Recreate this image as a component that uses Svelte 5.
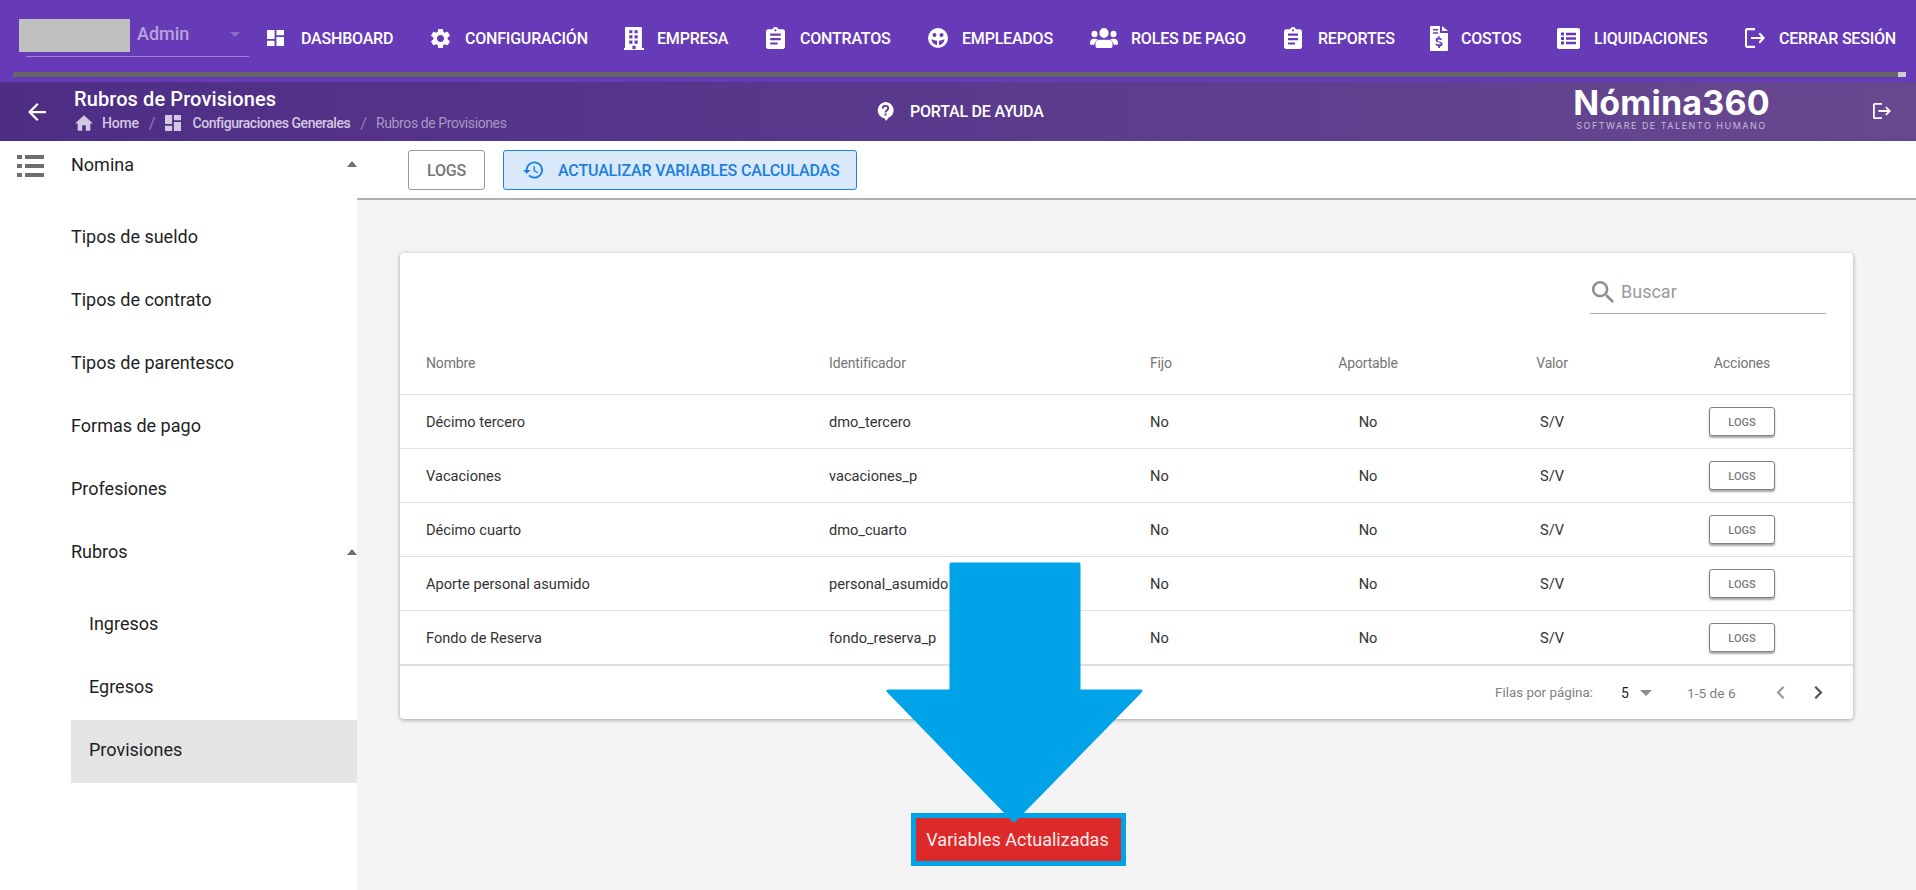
<script>
  const dash = 'M3 13h8V3H3v10zm0 8h8v-6H3v6zm10 0h8V11h-8v10zm0-18v6h8V3h-8z';
  const gear = 'M19.14 12.94c.04-.3.06-.61.06-.94 0-.32-.02-.64-.07-.94l2.03-1.58c.18-.14.23-.41.12-.61l-1.92-3.32c-.12-.22-.37-.29-.59-.22l-2.39.96c-.5-.38-1.03-.7-1.62-.94l-.36-2.54c-.04-.24-.24-.41-.48-.41h-3.84c-.24 0-.43.17-.47.41l-.36 2.54c-.59.24-1.13.57-1.62.94l-2.39-.96c-.22-.08-.47 0-.59.22L2.74 8.87c-.12.21-.08.47.12.61l2.03 1.58c-.05.3-.09.63-.09.94s.02.64.07.94l-2.03 1.58c-.18.14-.23.41-.12.61l1.92 3.32c.12.22.37.29.59.22l2.39-.96c.5.38 1.03.7 1.62.94l.36 2.54c.05.24.24.41.48.41h3.84c.24 0 .44-.17.47-.41l.36-2.54c.59-.24 1.13-.56 1.62-.94l2.39.96c.22.08.47 0 .59-.22l1.92-3.32c.12-.22.07-.47-.12-.61l-2.01-1.58zM12 15.6c-1.98 0-3.6-1.62-3.6-3.6s1.62-3.6 3.6-3.6 3.6 1.62 3.6 3.6-1.62 3.6-3.6 3.6z';
  const building = 'M2 0h14a1 1 0 0 1 1 1v19h2v2H0v-2h1V1a1 1 0 0 1 1-1zM5 3v3h3V3zM10 3v3h3V3zM5 8v3h3V8zM10 8v3h3V8zM5 13v3h3v-3zM10 13v3h3v-3zM8 18v3h3v-3z';
  const clip = 'M19 3h-4.18C14.4 1.84 13.3 1 12 1c-1.3 0-2.4.84-2.82 2H5c-1.1 0-2 .9-2 2v14c0 1.1.9 2 2 2h14c1.1 0 2-.9 2-2V5c0-1.1-.9-2-2-2zm-7 0c.55 0 1 .45 1 1s-.45 1-1 1-1-.45-1-1 .45-1 1-1zm2 14H7v-2h7v2zm3-4H7v-2h10v2zm0-4H7V7h10v2z';
  const face = 'M10 0a10 10 0 1 1 0 20a10 10 0 1 1 0-20zM6.5 5a2 2 0 1 0 0 4a2 2 0 1 0 0-4zM13.5 5a2 2 0 1 0 0 4a2 2 0 1 0 0-4zM3.5 11c.2 3 1.8 5.4 5.5 6.2v-4.4c-1.6-.2-3.6-.9-5.5-1.8zM16.5 11c-1.9.9-3.9 1.6-5.5 1.8v4.4c3.7-.8 5.3-3.2 5.5-6.2z';
  const users = 'M14 0a4.6 4.6 0 1 1 0 9.2a4.6 4.6 0 1 1 0-9.2zM4.5 2.6a3 3 0 1 1 0 6a3 3 0 1 1 0-6zM23.5 2.6a3 3 0 1 1 0 6a3 3 0 1 1 0-6zM0 14c0-2.3 1.4-4 3.6-4h2.2c.7 0 1.3.2 1.9.6c-1.8 1-3 2.8-3.3 5H1.2C.5 15.6 0 15 0 14zM28 14c0-2.3-1.4-4-3.6-4h-2.2c-.7 0-1.3.2-1.9.6c1.8 1 3 2.8 3.3 5h3.2c.7 0 1.2-.6 1.2-1.6zM9 10.8h10c2 0 3.5 1.6 3.5 3.6v2.2c0 1-.8 1.9-1.8 1.9H7.3c-1 0-1.8-.9-1.8-1.9v-2.2c0-2 1.5-3.6 3.5-3.6z';
  const file = 'M1 0h9v6c0 .6.4 1 1 1h7v17c0 .6-.4 1-1 1H1c-.6 0-1-.4-1-1V1c0-.6.4-1 1-1zM12 0l6 5h-6zM3 3v1.6h5V3zM3 6.200v1.600h5V6.200zM8.200 10v1.400c-1.600.2-2.600 1.200-2.600 2.500c0 2.900 5 2 5 3.500c0 .6-.7.9-1.600.9c-1 0-1.900-.3-2.800-.9l-.8 1.500c.8.6 1.800 1 2.800 1.100V22h1.800v-1.400c1.600-.3 2.600-1.300 2.600-2.700c0-3-5-2.100-5-3.500c0-.5.6-.8 1.400-.8c.9 0 1.700.3 2.300.6l.7-1.500c-.7-.4-1.500-.7-2.400-.8V10z';
  const listAlt = 'M2 0h19c1.100 0 2 .9 2 2v17c0 1.100-.9 2-2 2H2c-1.100 0-2-.9-2-2V2C0 .9.900 0 2 0zM4 4.500v3h3v-3zM9 4.800v2.400h10V4.800zM4 9v3h3V9zM9 9.300v2.400h10V9.300zM4 13.500v3h3v-3zM9 13.800v2.400h10v-2.400z';
  const exit = 'M17 7l-1.410 1.410L18.170 11H8v2h10.170l-2.580 2.580L17 17l5-5zM4 5h8V3H4c-1.100 0-2 .9-2 2v14c0 1.100.9 2 2 2h8v-2H4V5z';

  const nav = [
    { label: 'DASHBOARD', box: 34, w: 17, h: 16, vb: '3 3 18 18', d: dash },
    { label: 'CONFIGURACIÓN', box: 34, w: 19, h: 19, vb: '2.500 2.500 19 19', d: gear },
    { label: 'EMPRESA', box: 33, w: 20, h: 23, vb: '0 0 19 22', d: building },
    { label: 'CONTRATOS', box: 34, w: 19, h: 22, vb: '3 1 18 20', d: clip },
    { label: 'EMPLEADOS', box: 34, w: 20, h: 20, vb: '0 0 20 20', d: face },
    { label: 'ROLES DE PAGO', box: 41, w: 28, h: 20, vb: '0 0 28 18.500', d: users },
    { label: 'REPORTES', box: 34, w: 18, h: 22, vb: '3 1 18 20', d: clip },
    { label: 'COSTOS', box: 31, w: 18, h: 25, vb: '0 0 18 25', d: file },
    { label: 'LIQUIDACIONES', box: 37, w: 23, h: 21, vb: '0 0 23 21', d: listAlt },
    { label: 'CERRAR SESIÓN', box: 34, w: 20, h: 20, vb: '2 3 20 18', d: exit }
  ];
  const items = ['Tipos de sueldo', 'Tipos de contrato', 'Tipos de parentesco', 'Formas de pago', 'Profesiones'];
  const subs = ['Ingresos', 'Egresos', 'Provisiones'];
  const rows = [
    ['Décimo tercero', 'dmo_tercero'],
    ['Vacaciones', 'vacaciones_p'],
    ['Décimo cuarto', 'dmo_cuarto'],
    ['Aporte personal asumido', 'personal_asumido'],
    ['Fondo de Reserva', 'fondo_reserva_p']
  ];
</script>

<div class="page">
  <header class="top">
    <div class="toprow">
      <div class="user">
        <div class="userfield">
          <div class="avatar"></div>
          <span class="admin">Admin</span>
          <span class="userarrow"></span>
        </div>
      </div>
      <nav class="nav">
        {#each nav as n}
          <div class="navitem">
            <span class="navicon" style:width="{n.box}px">
              <svg width={n.w} height={n.h} viewBox={n.vb} preserveAspectRatio="none"><path d={n.d} fill="#fff" fill-rule="evenodd" /></svg>
            </span>
            <span class="navlabel">{n.label}</span>
          </div>
        {/each}
      </nav>
    </div>
    <div class="progress"><div class="progress-end"></div></div>
  </header>

  <section class="sub">
    <svg class="back" width="18" height="18" viewBox="4 4 16 16"><path d="M20 11H7.830l5.590-5.590L12 4l-8 8 8 8 1.410-1.410L7.830 13H20v-2z" fill="#fff" /></svg>
    <div class="titles">
      <div class="title">Rubros de Provisiones</div>
      <div class="crumbs">
        <svg class="c-home" width="18" height="16" viewBox="2 3 20 17"><path d="M10 20v-6h4v6h5v-8h3L12 3 2 12h3v8z" fill="#d3c9e2" /></svg>
        <span class="c-link">Home</span>
        <span class="c-sep">/</span>
        <svg class="c-dash" width="16" height="16" viewBox="3 3 18 18"><path d={dash} fill="#d3c9e2" /></svg>
        <span class="c-link c-conf">Configuraciones Generales</span>
        <span class="c-sep">/</span>
        <span class="c-cur">Rubros de Provisiones</span>
      </div>
    </div>
    <div class="help">
      <svg width="17" height="19" viewBox="0 0 17 19">
        <path d="M8.500 0a8.200 8.200 0 0 1 3 15.800L9 19l-1.200-2.500A8.300 8.300 0 0 1 8.500 0z" fill="#fff" />
        <path d="M5.800 6.400c0-1.500 1.200-2.500 2.700-2.500s2.700 1 2.700 2.400c0 2-2.600 2.100-2.600 4.200" fill="none" stroke="#59398d" stroke-width="1.900" />
        <rect x="7.500" y="11.500" width="2" height="2" fill="#59398d" />
      </svg>
      <span>PORTAL DE AYUDA</span>
    </div>
    <div class="logo">
      <div class="logo-name">Nómina360</div>
      <div class="logo-sub">SOFTWARE DE TALENTO HUMANO</div>
    </div>
    <svg class="subexit" width="18" height="16" viewBox="2 3 20 18" preserveAspectRatio="none"><path d={exit} fill="#fff" /></svg>
  </section>

  <div class="body">
    <aside class="side">
      <div class="sideicon">
        <svg width="27" height="22" viewBox="0 0 27 22" fill="#6e6e6e">
          <rect x="0" y="0" width="5" height="4" /><rect x="8" y="0" width="19" height="4" />
          <rect x="0" y="9" width="5" height="4" /><rect x="8" y="9" width="19" height="4" />
          <rect x="0" y="18" width="5" height="4" /><rect x="8" y="18" width="19" height="4" />
        </svg>
      </div>
      <div class="menu">
        <div class="mhead"><span>Nomina</span><i class="up"></i></div>
        <ul class="mlist">
          {#each items as it}<li class="mitem">{it}</li>{/each}
          <li class="mitem"><span>Rubros</span><i class="up"></i></li>
        </ul>
        <ul class="msub">
          {#each subs as s, i}<li class="mitem sub-item" class:active={i === 2}>{s}</li>{/each}
        </ul>
      </div>
    </aside>

    <main class="main">
      <div class="toolbar">
        <button class="btn">LOGS</button>
        <button class="btn primary">
          <svg width="20" height="18" viewBox="1 3 21 18"><path d="M13 3c-4.970 0-9 4.030-9 9H1l3.890 3.890.07.14L9 12H6c0-3.870 3.130-7 7-7s7 3.130 7 7-3.130 7-7 7c-1.930 0-3.680-.79-4.940-2.060l-1.420 1.420C8.270 19.990 10.510 21 13 21c4.970 0 9-4.030 9-9s-4.030-9-9-9zm-1 5v5l4.280 2.540.72-1.210-3.500-2.080V8H12z" fill="#1a7fe0" /></svg>
          <span>ACTUALIZAR VARIABLES CALCULADAS</span>
        </button>
      </div>
      <div class="content">
        <div class="card">
          <div class="searchrow">
            <div class="search">
              <svg width="22" height="22" viewBox="3 3 17.500 17.500"><path d="M15.500 14h-.79l-.28-.27C15.410 12.590 16 11.110 16 9.500 16 5.910 13.090 3 9.500 3S3 5.910 3 9.500 5.910 16 9.500 16c1.610 0 3.090-.59 4.230-1.570l.27.28v.79l5 4.990L20.490 19l-4.990-5zm-6 0C7.010 14 5 11.990 5 9.500S7.010 5 9.500 5 14 7.010 14 9.500 11.990 14 9.500 14z" fill="#8e8e8e" /></svg>
              <span>Buscar</span>
            </div>
          </div>
          <div class="grid head">
            <div>Nombre</div><div>Identificador</div><div>Fijo</div><div class="c">Aportable</div><div class="c">Valor</div><div class="c">Acciones</div>
          </div>
          {#each rows as r, i}
            <div class="grid row" class:last={i === rows.length - 1}>
              <div>{r[0]}</div><div>{r[1]}</div><div>No</div><div class="c">No</div><div class="c">S/V</div>
              <div class="c"><button class="mini">LOGS</button></div>
            </div>
          {/each}
          <div class="foot">
            <span class="f-label">Filas por página:</span>
            <span class="f-num">5</span>
            <i class="f-arrow"></i>
            <span class="f-range">1-5 de 6</span>
            <svg class="f-prev" width="9" height="13" viewBox="8 6 7.410 12"><path d="M15.410 7.410L14 6l-6 6 6 6 1.410-1.410L10.830 12z" fill="#9a9a9a" /></svg>
            <svg class="f-next" width="9" height="13" viewBox="8.590 6 7.410 12"><path d="M10 6L8.590 7.410 13.170 12l-4.580 4.590L10 18l6-6z" fill="#555" /></svg>
          </div>
        </div>
      </div>
    </main>
  </div>

  <div class="toast"><span>Variables Actualizadas</span></div>
  <svg class="bigarrow" width="270" height="274" viewBox="0 0 270 274">
    <path d="M71 8H199V135H261L134 265L8 135H71z" fill="#00a3e8" stroke="#00a3e8" stroke-width="3" stroke-linejoin="round" />
  </svg>
</div>

<style>
  :global(body) { margin: 0; overflow: hidden; background: #fff; }
  .page { position: relative; width: 1916px; height: 890px; overflow: hidden; font-family: Roboto, "Liberation Sans", sans-serif; color: #222; }
  .top { height: 82px; background: #673ab7; display: flex; flex-direction: column; }
  .toprow { height: 72px; display: flex; }
  .user { width: 267px; flex: none; padding: 19px 0 0 26px; box-sizing: border-box; }
  .userfield { width: 223px; height: 37px; display: flex; align-items: flex-start; border-bottom: 1px solid #9d84cf; }
  .avatar { width: 111px; height: 33px; margin-left: -7px; background: #c0c0c0; flex: none; }
  .admin { margin-left: 7px; font-size: 18px; font-weight: 500; line-height: 30px; color: #b7a3dd; }
  .userarrow { margin: 13px 0 0 41px; border-left: 5.500px solid transparent; border-right: 5.500px solid transparent; border-top: 5.500px solid #8a6fc0; }
  .nav { display: grid; grid-template-columns: 164px 193px 142px 162px 162px 194px 146px 127px 188px 1fr; flex: 1; }
  .navitem { display: flex; align-items: center; height: 76px; }
  .navicon { display: flex; align-items: center; flex: none; }
  .navicon svg { display: block; }
  .navlabel { font-size: 16px; letter-spacing: -.2px; font-weight: 500; color: #fff; white-space: nowrap; }
  .progress { height: 5px; margin: 0 10px 0 13px; background: #666; display: flex; justify-content: flex-end; }
  .progress-end { width: 8px; background: #ccc; }

  .sub { height: 59px; display: flex; align-items: flex-start; background: linear-gradient(90deg, #4e2d85 0%, #5a3a8c 50%, #67488f 100%); position: relative; }
  .back { margin: 21px 0 0 28px; flex: none; }
  .titles { margin-left: 28px; width: 803px; flex: none; }
  .title { font-size: 20px; letter-spacing: .1px; font-weight: 500; color: #fff; line-height: 24px; margin-top: 5px; }
  .crumbs { display: flex; align-items: center; height: 24px; margin-top: 0; margin-left: 1px; }
  .c-link { font-size: 14px; font-weight: 500; color: #d3c9e2; margin-left: 9px; letter-spacing: -.2px; }
  .c-conf { margin-left: 12px; letter-spacing: -.45px; }
  .c-sep { color: #a795c4; font-size: 17px; margin: 0 9px 0 10px; font-weight: 300; }
  .c-cur { font-size: 14px; color: #a898c4; letter-spacing: -.4px; }
  .help { display: flex; align-items: center; gap: 16px; margin-top: 20px; width: 695px; flex: none; font-size: 16px; letter-spacing: -.2px; font-weight: 500; color: #fff; height: 18px; }
  .logo { width: 199px; flex: none; color: #fff; text-align: center; }
  .logo-name { font-family: Inter, sans-serif; font-size: 34px; font-weight: 700; line-height: 34px; margin-top: 4px; letter-spacing: .2px; white-space: nowrap; }
  .logo-sub { font-family: Inter, sans-serif; font-size: 9px; color: #c7bbda; letter-spacing: 1.500px; white-space: nowrap; line-height: 10px; margin-top: 1px; }
  .subexit { position: absolute; left: 1873px; top: 21px; }

  .body { display: flex; height: 749px; }
  .side { width: 357px; flex: none; display: flex; background: #fff; }
  .sideicon { width: 71px; flex: none; padding: 14px 0 0 17px; box-sizing: border-box; }
  .sideicon svg { display: block; }
  .menu { flex: 1; font-size: 18px; color: #1f1f1f; }
  .mhead { height: 46px; display: flex; align-items: center; justify-content: space-between; }
  .mlist { list-style: none; margin: 18px 0 0; padding: 0; }
  .msub { list-style: none; margin: 11px 0 0; padding: 0; }
  .mitem { height: 63px; display: flex; align-items: center; justify-content: space-between; }
  .sub-item { padding: 0 0 4px 18px; box-sizing: border-box; }
  .active { background: #e4e4e4; }
  .up { border-left: 5.500px solid transparent; border-right: 5.500px solid transparent; border-bottom: 6px solid #707070; }

  .main { flex: 1; display: flex; flex-direction: column; min-width: 0; background: #f4f4f4; }
  .toolbar { background: #fff; border-bottom: 2px solid #b0b0b0; display: flex; gap: 18px; padding: 9px 0 0 51px; flex: none; height: 48px; }
  .btn { height: 40px; box-sizing: border-box; border: 1px solid #9a9a9a; border-radius: 3px; background: #fff; color: #777; font: 500 16px Roboto, sans-serif; letter-spacing: -.2px; padding: 0; width: 77px; }
  .primary { width: 354px; display: flex; align-items: center; gap: 15px; padding-left: 19px; background: #d9e9f9; border-color: #1a84e6; color: #1a7fe0; white-space: nowrap; letter-spacing: -.15px; }
  .primary svg { flex: none; }

  .content { flex: 1; padding: 53px 63px 0 43px; }
  .card { background: #fff; border-radius: 4px; height: 466px; box-shadow: 0 1px 4px rgba(0,0,0,.35); }
  .searchrow { height: 61px; display: flex; justify-content: flex-end; padding-right: 27px; }
  .search { width: 236px; height: 61px; box-sizing: border-box; border-bottom: 1px solid #aaa; display: flex; align-items: center; gap: 7px; padding: 17px 0 0 2px; font-size: 18px; color: #9a9a9a; }
  .grid { display: grid; grid-template-columns: 403px 321px 139px 210px 158px 222px; box-sizing: border-box; font-size: 14.600px; align-items: center; }
  .grid > div:nth-child(-n+3) { padding-left: 26px; }
  .grid .c { text-align: center; }
  .head { height: 81px; padding-top: 18px; color: #757575; font-size: 14px; letter-spacing: -.15px; border-bottom: 1px solid #e0e0e0; }
  .row { height: 54px; color: #333; border-bottom: 1px solid #e0e0e0; }
  .row.last { height: 55px; border-bottom-width: 2px; }
  .mini { width: 66px; height: 29px; box-sizing: border-box; padding: 1px 0 0; background: #fff; border: 1px solid #808080; border-radius: 3px; color: #7b7b7b; font: 500 11px Roboto, sans-serif; box-shadow: 0 2px 2px rgba(0,0,0,.35); display: inline-block; vertical-align: middle; }
  .foot { height: 53px; display: flex; align-items: center; font-size: 13.400px; color: #808080; padding-left: 1095px; }
  .f-label { width: 126px; flex: none; white-space: nowrap; }
  .f-num { width: 19px; flex: none; color: #1f1f1f; font-size: 14px; }
  .f-arrow { flex: none; width: 0; border-left: 6px solid transparent; border-right: 6px solid transparent; border-top: 6px solid #8e8e8e; margin-right: 35px; }
  .f-range { width: 89px; flex: none; white-space: nowrap; font-size: 13.700px; }
  .f-prev { margin-right: 29px; flex: none; }
  .f-next { flex: none; }

  .toast { position: absolute; left: 911px; top: 813px; width: 215px; height: 53px; box-sizing: border-box; border: 5px solid #00a3e8; background: #dc2a2a; color: #fdeaea; font-size: 18px; padding-right: 2px; display: flex; align-items: center; justify-content: center; white-space: nowrap; }
  .bigarrow { position: absolute; left: 880px; top: 556px; }
</style>
